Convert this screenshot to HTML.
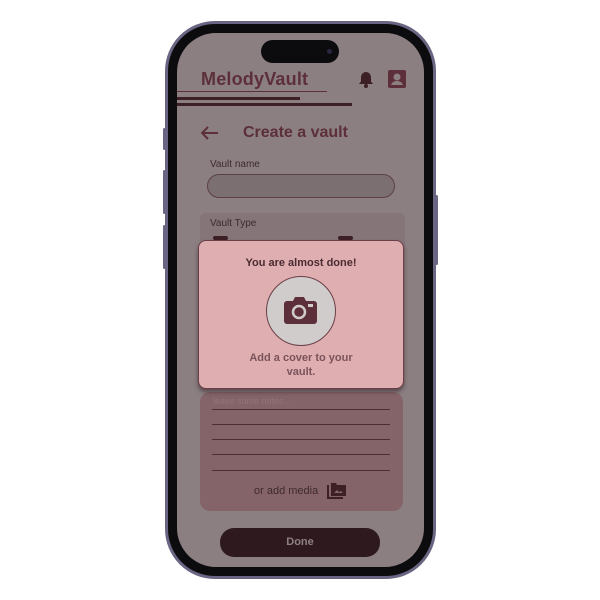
<!DOCTYPE html>
<html><head><style>
*{margin:0;padding:0;box-sizing:border-box}
body{width:600px;height:600px;background:#fff;position:relative;overflow:hidden;font-family:"Liberation Sans",sans-serif}
.abs{position:absolute}
.frame{left:165px;top:21px;width:271px;height:558px;border-radius:50px;background:#6a6582}
.bezel{left:168px;top:24px;width:265px;height:552px;border-radius:47px;background:#0c0b0e}
.screen{left:177px;top:33px;width:247px;height:534px;border-radius:39px;background:#8b7f81;overflow:hidden}
.t{color:#5c2f3a;font-weight:900}
</style></head><body>
<div class="abs frame"></div>
<div class="abs" style="left:163px;top:128px;width:3px;height:22px;background:#6a6582;border-radius:2px"></div>
<div class="abs" style="left:163px;top:170px;width:3px;height:44px;background:#6a6582;border-radius:2px"></div>
<div class="abs" style="left:163px;top:225px;width:3px;height:44px;background:#6a6582;border-radius:2px"></div>
<div class="abs" style="left:435px;top:195px;width:3px;height:70px;background:#6a6582;border-radius:2px"></div>
<div class="abs bezel"></div>
<div class="abs screen">
  <div class="abs" style="left:84px;top:7px;width:78px;height:23px;border-radius:12px;background:#0c0b0e"></div>
  <div class="abs" style="left:150px;top:16px;width:5px;height:5px;border-radius:50%;background:#2a2840"></div>
  <div class="abs t" style="left:24px;top:36px;font-size:18px;letter-spacing:0.2px">MelodyVault</div>
  <svg class="abs" style="left:181px;top:38px" width="16" height="17" viewBox="0 0 16 17"><path d="M8 1c-3 0-5 2.5-5 5.5v4L1 13h14l-2-2.5v-4C13 3.5 11 1 8 1z" fill="#3d1f26"/><circle cx="8" cy="15" r="2" fill="#3d1f26"/></svg>
  <svg class="abs" style="left:211px;top:37px" width="18" height="18" viewBox="0 0 18 18"><rect width="18" height="18" rx="2" fill="#5c2f3a"/><circle cx="9" cy="7" r="3.5" fill="#8b7f81"/><path d="M3 15c1-3 3.5-4 6-4s5 1 6 4z" fill="#8b7f81"/></svg>
  <div class="abs" style="left:0;top:58px;width:150px;height:1px;background:#5c2f3a"></div>
  <div class="abs" style="left:0;top:64px;width:123px;height:3px;background:#3d1f26"></div>
  <div class="abs" style="left:0;top:70px;width:175px;height:3px;background:#3d1f26"></div>
  <svg class="abs" style="left:24px;top:93px" width="18" height="14" viewBox="0 0 18 14"><path d="M17 7H2M7 1L1 7l6 6" stroke="#5c2f3a" stroke-width="2" fill="none"/></svg>
  <div class="abs t" style="left:66px;top:91px;font-size:16px">Create a vault</div>
  <div class="abs" style="left:33px;top:126px;font-size:10px;color:#3f2a2e">Vault name</div>
  <div class="abs" style="left:30px;top:141px;width:188px;height:24px;border-radius:12px;background:#7b6f71;border:1px solid #5c3f45"></div>
  <div class="abs" style="left:23px;top:180px;width:205px;height:40px;border-radius:6px;background:#857578"></div>
  <div class="abs" style="left:33px;top:185px;font-size:10px;color:#3f2a2e">Vault Type</div>
  <div class="abs" style="left:36px;top:203px;width:15px;height:4px;border-radius:2px;background:#3d1f26"></div>
  <div class="abs" style="left:161px;top:203px;width:15px;height:4px;border-radius:2px;background:#3d1f26"></div>
  <div class="abs" style="left:23px;top:359px;width:203px;height:119px;border-radius:10px;background:#846468"></div>
  <div class="abs" style="left:36px;top:363px;font-size:9px;color:#927478">leave some notes...</div>
  <div class="abs" style="left:35px;top:376px;width:178px;height:1px;background:#4a2e34"></div>
  <div class="abs" style="left:35px;top:391px;width:178px;height:1px;background:#4a2e34"></div>
  <div class="abs" style="left:35px;top:406px;width:178px;height:1px;background:#4a2e34"></div>
  <div class="abs" style="left:35px;top:421px;width:178px;height:1px;background:#4a2e34"></div>
  <div class="abs" style="left:35px;top:437px;width:178px;height:1px;background:#4a2e34"></div>
  <div class="abs" style="left:77px;top:452px;font-size:11px;color:#3f2a2e">or add media</div>
  <svg class="abs" style="left:150px;top:449px" width="20" height="17" viewBox="0 0 20 17"><path d="M1 3v13h15" stroke="#3d1f26" stroke-width="2" fill="none"/><path d="M4 1h5l1 2h9v11H4z" fill="#3d1f26"/><path d="M7 11l3-3 2 2 2-1 2 2z" fill="#846468"/></svg>
  <div class="abs" style="left:21px;top:207px;width:206px;height:149px;border-radius:8px;background:#dfaeb0;border:1px solid #6a3f47;box-shadow:0 3px 4px rgba(40,20,25,.5)"></div>
  <div class="abs" style="left:21px;top:224px;width:206px;text-align:center;font-size:11px;font-weight:900;color:#4a2b32">You are almost done!</div>
  <div class="abs" style="left:89px;top:243px;width:70px;height:70px;border-radius:50%;background:#d1cccc;border:1.5px solid #6a3f47"></div>
  <svg class="abs" style="left:106px;top:262px" width="35" height="30" viewBox="0 0 35 30"><path d="M12 2h9l2 4h8a3 3 0 0 1 3 3v17a3 3 0 0 1-3 3H4a3 3 0 0 1-3-3V9a3 3 0 0 1 3-3h6z" fill="#5c2f3a"/><circle cx="16" cy="17" r="6" fill="none" stroke="#d1cccc" stroke-width="2.5"/><rect x="25" y="9" width="5" height="3" fill="#d1cccc"/></svg>
  <div class="abs" style="left:21px;top:318px;width:206px;text-align:center;font-size:11px;font-weight:900;color:#7a535b;line-height:14px">Add a cover to your<br>vault.</div>
  <div class="abs" style="left:43px;top:495px;width:160px;height:29px;border-radius:14px;background:#2e1a1e;text-align:center;line-height:29px;font-size:11px;font-weight:900;color:#8d8082">Done</div>
</div>
</body></html>
